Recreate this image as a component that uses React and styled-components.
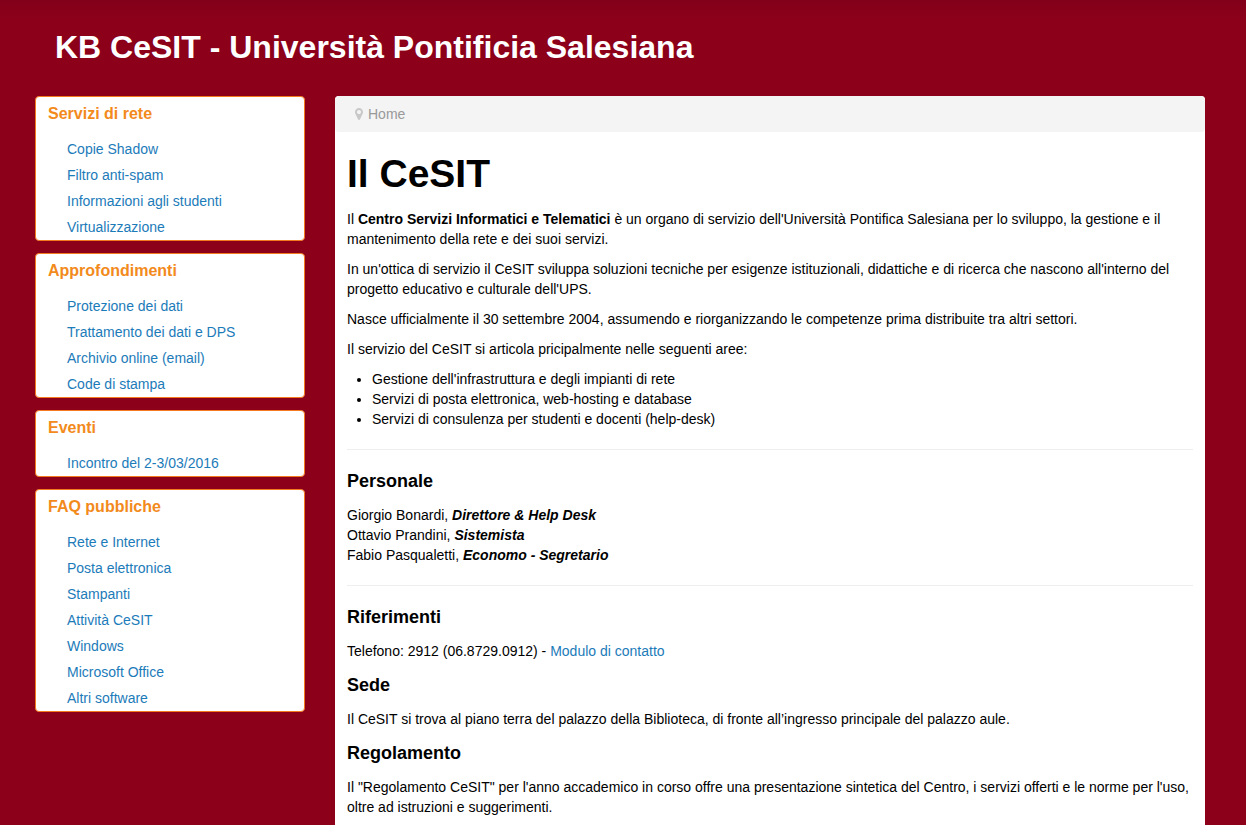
import styled, { createGlobalStyle } from "styled-components"

const GlobalStyle = createGlobalStyle`
    * {
        box-sizing: border-box;
    }
    body {
        margin: 0;
        background: #8c001a linear-gradient(#82001a, #8c001a) no-repeat top / 100% 20px;
        color: #000;
        font-family: "Liberation Sans", Arial, sans-serif;
        font-size: 14px;
        line-height: 20px;
    }
    a {
        color: #1c7bb9;
        text-decoration: none;
    }
    a:hover {
        text-decoration: underline;
    }
`

const Page = styled.div`
    min-height: 100vh;
    padding: 0 41px 0 35px;
    display: flex;
    flex-direction: column;
`

const Header = styled.header`
    padding: 27px 20px 29px;
`

const SiteTitle = styled.h1`
    margin: 0;
    font-size: 32px;
    line-height: 40px;
    color: #fff;
`

const Columns = styled.div`
    flex: 1;
    display: flex;
    gap: 30px;
`

const Sidebar = styled.aside`
    flex: 0 0 270px;
    display: flex;
    flex-direction: column;
    gap: 12px;
`

const Card = styled.nav`
    background: #fff;
    border: 1px solid #f47a20;
    border-radius: 4px;
`

const CardTitle = styled.h2`
    margin: 0;
    padding: 7px 12px 12px;
    font-size: 16px;
    line-height: 20px;
    color: #f28a1c;
`

const CardLinks = styled.ul`
    margin: 0;
    padding: 0 0 0 31px;
    list-style: none;
    line-height: 26px;
`

const Main = styled.main`
    flex: 1;
    min-width: 0;
    background: #fff;
    border-radius: 4px 4px 0 0;
`

const Breadcrumb = styled.div`
    display: flex;
    align-items: center;
    gap: 5px;
    padding: 8px 20px;
    background: #f4f4f4;
    border-radius: 4px;
    color: #999;
`

const MarkerIcon = styled.svg`
    width: 8px;
    height: 12px;
    fill: #c8c8c8;
`

const Article = styled.article`
    padding: 22px 12px 0;
`

const Title = styled.h1`
    margin: 0 0 15px;
    font-size: 39px;
    line-height: 40px;
`

const Heading = styled.h3`
    margin: 14px 0;
    font-size: 18px;
    line-height: 20px;
`

const Text = styled.p`
    margin: 0 0 10px;
`

const Areas = styled.ul`
    margin: 0 0 10px;
    padding: 0 0 0 25px;
`

const Divider = styled.hr`
    margin: 20px 0;
    border: 0;
    border-top: 1px solid #eee;
    border-bottom: 1px solid #fff;
`

const menus = [
    {
        title: "Servizi di rete",
        links: ["Copie Shadow", "Filtro anti-spam", "Informazioni agli studenti", "Virtualizzazione"],
    },
    {
        title: "Approfondimenti",
        links: ["Protezione dei dati", "Trattamento dei dati e DPS", "Archivio online (email)", "Code di stampa"],
    },
    {
        title: "Eventi",
        links: ["Incontro del 2-3/03/2016"],
    },
    {
        title: "FAQ pubbliche",
        links: ["Rete e Internet", "Posta elettronica", "Stampanti", "Attività CeSIT", "Windows", "Microsoft Office", "Altri software"],
    },
]

const Marker = () => (
    <MarkerIcon viewBox="384 128 1024 1536" aria-hidden="true">
        <path d="M1152 640q0-106-75-181t-181-75-181 75-75 181 75 181 181 75 181-75 75-181zm256 0q0 109-33 179l-364 774q-16 33-47.5 52t-67.5 19-67.5-19-46.5-52l-365-774q-33-70-33-179 0-212 150-362t362-150 362 150 150 362z" />
    </MarkerIcon>
)

const Menu = ({ title, links }) => (
    <Card aria-label={title}>
        <CardTitle>{title}</CardTitle>
        <CardLinks>
            {links.map((link) => (
                <li key={link}><a href="#">{link}</a></li>
            ))}
        </CardLinks>
    </Card>
)

const App = () => {
    return (
        <Page>
            <GlobalStyle />
            <Header>
                <SiteTitle>KB CeSIT - Università Pontificia Salesiana</SiteTitle>
            </Header>
            <Columns>
                <Sidebar>
                    {menus.map((menu) => <Menu key={menu.title} {...menu} />)}
                </Sidebar>
                <Main>
                    <Breadcrumb>
                        <Marker />
                        <span>Home</span>
                    </Breadcrumb>
                    <Article>
                        <Title>Il CeSIT</Title>
                        <Text>
                            Il <strong>Centro Servizi Informatici e Telematici</strong> è un organo di servizio dell'Università Pontifica Salesiana per lo sviluppo, la gestione e il mantenimento della rete e dei suoi servizi.
                        </Text>
                        <Text>
                            In un'ottica di servizio il CeSIT sviluppa soluzioni tecniche per esigenze istituzionali, didattiche e di ricerca che nascono all'interno del progetto educativo e culturale dell'UPS.
                        </Text>
                        <Text>Nasce ufficialmente il 30 settembre 2004, assumendo e riorganizzando le competenze prima distribuite tra altri settori.</Text>
                        <Text>Il servizio del CeSIT si articola pricipalmente nelle seguenti aree:</Text>
                        <Areas>
                            <li>Gestione dell'infrastruttura e degli impianti di rete</li>
                            <li>Servizi di posta elettronica, web-hosting e database</li>
                            <li>Servizi di consulenza per studenti e docenti (help-desk)</li>
                        </Areas>
                        <Divider />
                        <Heading>Personale</Heading>
                        <Text>
                            Giorgio Bonardi, <strong><em>Direttore &amp; Help Desk</em></strong><br />
                            Ottavio Prandini, <strong><em>Sistemista</em></strong><br />
                            Fabio Pasqualetti, <strong><em>Economo - Segretario</em></strong>
                        </Text>
                        <Divider />
                        <Heading>Riferimenti</Heading>
                        <Text>
                            Telefono: 2912 (06.8729.0912) - <a href="#">Modulo di contatto</a>
                        </Text>
                        <Heading>Sede</Heading>
                        <Text>Il CeSIT si trova al piano terra del palazzo della Biblioteca, di fronte all’ingresso principale del palazzo aule.</Text>
                        <Heading>Regolamento</Heading>
                        <Text>
                            Il "Regolamento CeSIT" per l'anno accademico in corso offre una presentazione sintetica del Centro, i servizi offerti e le norme per l'uso, oltre ad istruzioni e suggerimenti.
                        </Text>
                    </Article>
                </Main>
            </Columns>
        </Page>
    )
}

export default App
